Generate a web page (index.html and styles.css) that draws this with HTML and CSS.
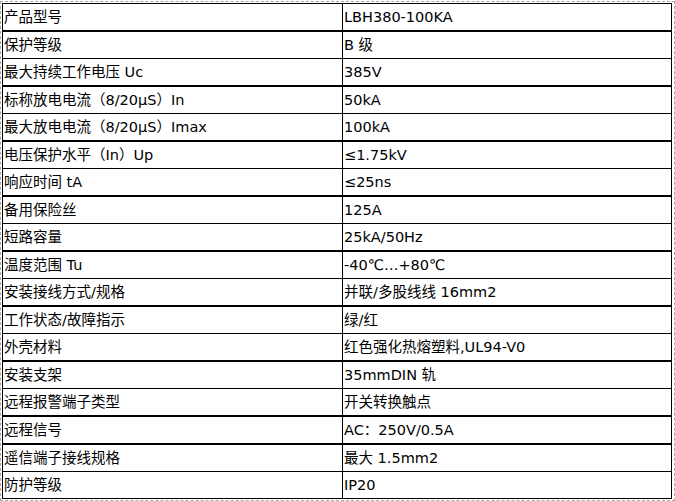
FILE: index.html
```html
<!DOCTYPE html>
<html lang="zh-CN">
<head>
<meta charset="utf-8">
<title>产品参数</title>
<link rel="stylesheet" href="styles.css">
</head>
<body>
<div class="frame">
<table class="spec">
<tr class="tk"><td class="k">产品型号</td><td class="v">LBH380-100KA</td></tr>
<tr><td class="k">保护等级</td><td class="v">B 级</td></tr>
<tr class="tk"><td class="k">最大持续工作电压 Uc</td><td class="v">385V</td></tr>
<tr><td class="k">标称放电电流（8/20μS）In</td><td class="v">50kA</td></tr>
<tr class="tk"><td class="k">最大放电电流（8/20μS）Imax</td><td class="v">100kA</td></tr>
<tr><td class="k">电压保护水平（In）Up</td><td class="v">≤1.75kV</td></tr>
<tr class="tk"><td class="k">响应时间 tA</td><td class="v">≤25ns</td></tr>
<tr><td class="k">备用保险丝</td><td class="v">125A</td></tr>
<tr class="tk"><td class="k">短路容量</td><td class="v">25kA/50Hz</td></tr>
<tr><td class="k">温度范围 Tu</td><td class="v">-40℃…+80℃</td></tr>
<tr class="tk"><td class="k">安装接线方式/规格</td><td class="v">并联/多股线线 16mm2</td></tr>
<tr><td class="k">工作状态/故障指示</td><td class="v">绿/红</td></tr>
<tr class="tk"><td class="k">外壳材料</td><td class="v">红色强化热熔塑料,UL94-V0</td></tr>
<tr><td class="k">安装支架</td><td class="v">35mmDIN 轨</td></tr>
<tr class="tk"><td class="k">远程报警端子类型</td><td class="v">开关转换触点</td></tr>
<tr class="tk"><td class="k">远程信号</td><td class="v">AC：250V/0.5A</td></tr>
<tr><td class="k">遥信端子接线规格</td><td class="v">最大 1.5mm2</td></tr>
<tr><td class="k">防护等级</td><td class="v">IP20</td></tr>
</table>
</div>
</body>
</html>
```
FILE: styles.css
```css
html, body {
  margin: 0;
  padding: 0;
  background: #fff;
}
body {
  font-family: "DejaVu Sans", "Noto Sans CJK SC", sans-serif;
  font-size: 14.5px;
  color: #000;
  text-spacing-trim: space-all;
}
.frame {
  margin-top: 1px;
  width: 672px;
  height: 497px;
  border: 1px dashed #a8a8a8;
  padding: 1px 0 0 1px;
  box-sizing: content-box;
  overflow: hidden;
}
.spec {
  border-collapse: collapse;
  width: 670px;
  table-layout: fixed;
}
.spec td {
  border: 1px solid #000;
  height: 26px;
  padding: 0 1px;
  vertical-align: middle;
  white-space: nowrap;
  line-height: 1;
}
.spec tr.tk td {
  border-bottom-width: 2px;
}
.spec .k {
  width: 337px;
}
.spec .v {
  padding-left: 1px;
}
```
